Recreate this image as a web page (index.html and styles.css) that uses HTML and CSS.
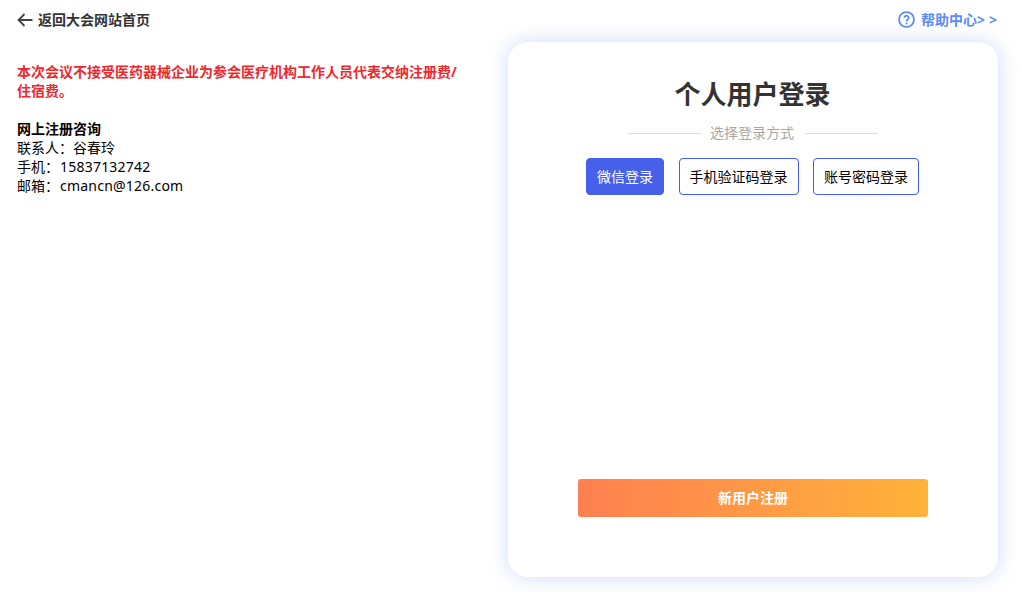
FILE: index.html
```html
<!DOCTYPE html>
<html lang="zh-CN">
<head>
<meta charset="utf-8">
<title>个人用户登录</title>
<link rel="stylesheet" href="styles.css">
</head>
<body>
<div class="page">
  <header class="topbar">
    <a class="back">
      <svg class="back-icon" viewBox="0 0 16 14" width="16" height="14"><path d="M15.5 7H1.8M7.5 1 1.5 7l6 6" fill="none" stroke="#444" stroke-width="1.8"/></svg>
      <span>返回大会网站首页</span>
    </a>
    <a class="help">
      <svg class="help-icon" viewBox="0 0 18 18" width="17" height="17"><circle cx="9" cy="9" r="7.9" fill="none" stroke="#5b8cf5" stroke-width="1.9"/><path d="M6.7 7.2a2.3 2.3 0 1 1 3.6 1.9c-.8.5-1.3 1-1.3 1.9" fill="none" stroke="#5b8cf5" stroke-width="1.8"/><circle cx="9" cy="13.2" r="1.1" fill="#5b8cf5"/></svg>
      <span>帮助中心<span class="chevrons">&gt;&gt;</span></span>
    </a>
  </header>
  <main class="main">
    <section class="info">
      <p class="notice">本次会议不接受医药器械企业为参会医疗机构工作人员代表交纳注册费/住宿费。</p>
      <p class="contact">
        <strong>网上注册咨询</strong><br>
        联系人：谷春玲<br>
        手机：<span class="latin">15837132742</span><br>
        邮箱：<span class="latin">cmancn@126.com</span>
      </p>
    </section>
    <section class="card">
      <h1 class="title">个人用户登录</h1>
      <div class="divider"><span class="divider-text">选择登录方式</span></div>
      <div class="methods">
        <button class="method active">微信登录</button>
        <button class="method">手机验证码登录</button>
        <button class="method">账号密码登录</button>
      </div>
      <div class="qr-area"></div>
      <button class="register">新用户注册</button>
    </section>
  </main>
</div>
</body>
</html>
```
FILE: styles.css
```css
* { box-sizing: border-box; }
html, body { margin: 0; padding: 0; background: #fff; }
body {
  font-family: "Noto Sans", "Noto Sans CJK SC", sans-serif;
  font-size: 14px;
  line-height: 19px;
  color: #000;
  overflow: hidden;
}
.page { width: 1022px; height: 592px; }
.topbar {
  display: flex;
  justify-content: space-between;
  align-items: center;
  height: 42px;
  padding: 0 21px 3px 17px;
}
.back, .help {
  display: flex;
  align-items: center;
  font-size: 14px;
  font-weight: 700;
}
.back { color: #333; gap: 5px; }
.help { color: #5b8cf5; gap: 6px; }
.chevrons { letter-spacing: 4px; font-size: 14px; }
.main { display: flex; justify-content: space-between; padding: 0 24px 0 17px; }
.info { width: 446px; padding-top: 20px; }
.notice { margin: 0; color: #f0282d; font-weight: 700; font-size: 14px; }
.contact { margin: 19px 0 0; }
.contact strong { font-weight: 700; }
.latin { letter-spacing: 0.22px; margin-left: 1px; }
.card {
  width: 490px;
  height: 535px;
  background: #fff;
  border-radius: 20px;
  box-shadow: 0 0 20px rgba(60, 115, 235, 0.26);
  display: flex;
  flex-direction: column;
  align-items: center;
  padding-top: 33px;
}
.title {
  margin: 0 1px 0 0;
  font-size: 26px;
  line-height: 38px;
  font-weight: 700;
  color: #333;
}
.divider {
  width: 250px;
  margin-top: 10px;
  display: flex;
  align-items: center;
  gap: 10px;
  font-size: 14px;
  color: #a9a9a2;
}
.divider::before, .divider::after {
  content: "";
  flex: 1;
  height: 1px;
  margin-top: 2px;
  background: #ddd;
}
.divider-text { margin: 0 1px 0 -1px; }
.methods { display: flex; gap: 14.5px; margin: 16px 1px 0 0; }
.method {
  height: 37px;
  padding: 0 10px;
  font: inherit;
  font-size: 14px;
  color: #000;
  background: #fff;
  border: 1px solid #3f5ff0;
  border-radius: 4px;
}
.method.active { background: #4660ea; color: #fff; }
.qr-area { flex: 1; }
.register {
  width: 350px;
  height: 38px;
  margin-bottom: 60px;
  padding: 0 0 2px;
  border: 0;
  border-radius: 3px;
  font: inherit;
  font-size: 14px;
  font-weight: 700;
  color: #fff;
  background: linear-gradient(90deg, #ff7f50, #ffb33a);
}
```
